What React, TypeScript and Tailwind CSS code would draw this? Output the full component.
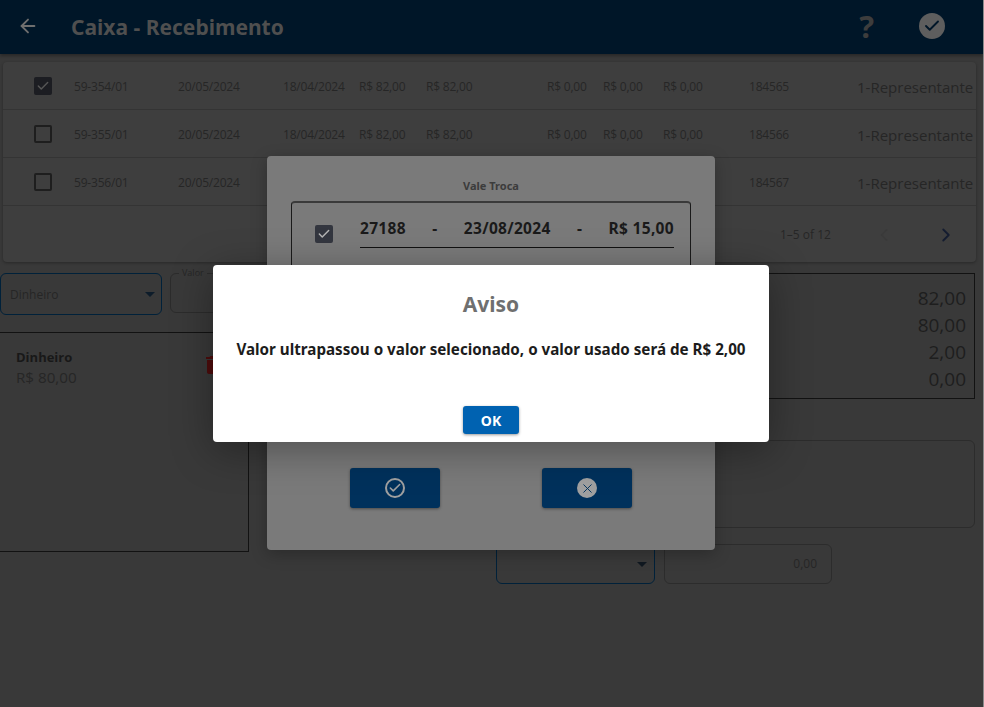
import { ArrowLeft, Check, ChevronLeft, ChevronRight, X } from "lucide-react";

const rows = [
  { id: "59-354/01", d2: "18/04/2024", num: "184565", on: true, covered: false },
  { id: "59-355/01", d2: "18/04/2024", num: "184566", on: false, covered: false },
  { id: "59-356/01", d2: "18/04/2024", num: "184567", on: false, covered: true },
];

function Box({ on, light }: { on?: boolean; light?: boolean }) {
  if (on) {
    return (
      <div className={`flex h-[18px] w-[18px] items-center justify-center rounded-[2px] ${light ? "bg-[#33363f]" : "bg-[#1c1d22]"}`}>
        <Check size={14} strokeWidth={2.5} className={light ? "text-[#b5b5b5]" : "text-[#565656]"} />
      </div>
    );
  }
  return <div className="h-[18px] w-[18px] rounded-[2px] border-2 border-[#1e1e1e]" />;
}

function Row({ r }: { r: (typeof rows)[number] }) {
  return (
    <div className="flex h-[48px] items-center border-b border-[#343434] pt-[2px] text-[12px] leading-none tracking-[-0.2px] text-[#262626]">
      <div className="ml-[31px] -mt-[1px] w-[40px]"><Box on={r.on} /></div>
      <div className="w-[104px]">{r.id}</div>
      <div className="w-[105px]">20/05/2024</div>
      <div className="w-[76px]">{r.covered ? "" : r.d2}</div>
      <div className="w-[67px]">{r.covered ? "" : "R$ 82,00"}</div>
      <div className="w-[121px]">{r.covered ? "" : "R$ 82,00"}</div>
      <div className="w-[56px]">{r.covered ? "" : "R$ 0,00"}</div>
      <div className="w-[60px]">{r.covered ? "" : "R$ 0,00"}</div>
      <div className="w-[86px]">{r.covered ? "" : "R$ 0,00"}</div>
      <div className="w-[108px]">{r.num}</div>
      <div className="whitespace-nowrap pt-[1px] text-[15px] tracking-normal">1-Representante</div>
    </div>
  );
}

export default function App() {
  return (
    <div className="relative h-[707px] w-[984px] overflow-hidden border-r border-[#8a8a8a] bg-[#393939] [font-family:'Open_Sans',sans-serif]">
      <header className="flex h-[54px] items-center bg-[#001628] shadow-[0_2px_3px_rgba(0,0,0,0.3)]">
        <ArrowLeft size={22} strokeWidth={2} className="ml-[17px] -mt-[3px] text-[#6f6f6f]" />
        <h1 className="ml-[32px] pt-[2px] text-[21px] font-bold text-[#4f4f4f] [font-family:'Noto_Sans',sans-serif]">Caixa - Recebimento</h1>
        <span className="ml-auto mr-[45px] -mt-[2px] text-[31px] font-bold leading-none text-[#3d3d3d] [font-family:'Noto_Sans',sans-serif]">?</span>
        <div className="mr-[38px] -mt-[2px] flex h-[26px] w-[26px] items-center justify-center rounded-full bg-[#5e5e5e]">
          <Check size={18} strokeWidth={2.5} className="text-[#001628]" />
        </div>
      </header>

      <section className="ml-[3px] mr-[7px] mt-[8px] h-[200px] rounded-[4px] bg-[#3e3e3e] shadow-[0_1px_3px_rgba(0,0,0,0.3)]">
        {rows.map((r) => <Row key={r.id} r={r} />)}
        <div className="flex h-[56px] items-center pt-[2px] text-[12px] text-[#262626]">
          <span className="ml-[777px]">1–5 of 12</span>
          <ChevronLeft size={20} className="ml-[43px] text-[#3a3a3a]" />
          <ChevronRight size={22} className="ml-[41px] text-[#141c30]" />
        </div>
      </section>

      <div className="mt-[11px] flex gap-[5px]">
        <div className="w-[491px]">
          <div className="flex gap-[8px]">
            <div className="flex h-[42px] w-[162px] items-center justify-between rounded-[6px] border border-[#00213a] pl-[9px] pr-[6px] pt-[2px] text-[12px] text-[#262626]">
              Dinheiro
              <span className="mb-[2px] h-0 w-0 border-x-[5px] border-t-[5px] border-x-transparent border-t-[#0d1c2a]" />
            </div>
            <div className="relative h-[40px] flex-1 rounded-[6px] border border-[#2c2c2c]">
              <span className="absolute -top-[6px] left-[8px] bg-[#393939] px-[3px] text-[9px] leading-none text-[#262626]">Valor</span>
            </div>
          </div>
          <div className="mt-[17px] flex h-[220px] w-[249px] justify-between border border-l-0 border-[#121212] pr-[23px] pl-[16px] pt-[15px]">
            <div>
              <div className="text-[13px] font-bold leading-[18px] text-[#181818]">Dinheiro</div>
              <div className="text-[15.2px] leading-[22px] text-[#262626]">R$ 80,00</div>
            </div>
            <svg viewBox="0 0 24 24" width="24" height="24" className="mt-[5px] fill-[#4e0c0c]">
              <path d="M6 19c0 1.1.9 2 2 2h8c1.1 0 2-.9 2-2V7H6v12zM19 4h-3.5l-1-1h-5l-1 1H5v2h14V4z" />
            </svg>
          </div>
        </div>
        <div className="w-[479px]">
          <div className="h-[126px] border border-[#121212] px-[8px] pt-[11px] text-right text-[19px] leading-[27px] text-[#1e1e1e]">
            <div>82,00</div>
            <div>80,00</div>
            <div>2,00</div>
            <div>0,00</div>
          </div>
          <div className="mt-[41px] h-[88px] rounded-[6px] border border-[#2c2c2c]" />
          <div className="mt-[16px] flex gap-[9px]">
            <div className="flex h-[40px] w-[159px] items-center justify-end rounded-[6px] border border-[#00213a] pr-[7px]">
              <span className="h-0 w-0 border-x-[5px] border-t-[5px] border-x-transparent border-t-[#101820]" />
            </div>
            <div className="flex h-[40px] w-[168px] items-center justify-end rounded-[6px] border border-[#2c2c2c] pr-[14px] text-[12px] text-[#262626]">0,00</div>
          </div>
        </div>
      </div>

      <div className="absolute left-[267px] top-[156px] flex h-[394px] w-[448px] flex-col items-center rounded-[4px] bg-[#7a7a7a] shadow-[0_4px_16px_rgba(0,0,0,0.25)]">
        <div className="mt-[22px] text-[11px] font-bold leading-[16px] text-[#3c3c3c] [font-family:'Noto_Sans',sans-serif]">Vale Troca</div>
        <div className="mt-[7px] h-[225px] w-[400px] rounded-[4px] border border-[#1a1a1a] border-t-2 border-t-[#3a3a3a]">
          <div className="ml-[23px] mt-[13px] flex items-start">
            <div className="mt-[9px]"><Box on light /></div>
            <div className="ml-[27px] flex h-[32px] w-[314px] items-center justify-between border-b border-[#111111] pb-[6px] text-[15.5px] font-bold leading-none tracking-[0.3px] text-[#1a1a1a] [font-family:'Noto_Sans',sans-serif]">
              <span>27188</span><span>-</span><span>23/08/2024</span><span>-</span><span>R$ 15,00</span>
            </div>
          </div>
        </div>
        <div className="mt-[42px] flex gap-[102px]">
          <div className="flex h-[40px] w-[90px] items-center justify-center rounded-[3px] bg-[#00315c] shadow-[0_1px_3px_rgba(0,0,0,0.4)]">
            <div className="flex h-[20px] w-[20px] items-center justify-center rounded-full border-2 border-[#a0a0a0]">
              <Check size={14} strokeWidth={2.75} className="text-[#a0a0a0]" />
            </div>
          </div>
          <div className="flex h-[40px] w-[90px] items-center justify-center rounded-[3px] bg-[#00315c] shadow-[0_1px_3px_rgba(0,0,0,0.4)]">
            <div className="flex h-[20px] w-[20px] items-center justify-center rounded-full bg-[#a0a0a0]">
              <X size={15} strokeWidth={1.5} className="text-[#00315c]" />
            </div>
          </div>
        </div>
      </div>

      <div className="absolute left-[213px] top-[265px] flex h-[177px] w-[556px] flex-col items-center rounded-[4px] bg-white shadow-[0_8px_40px_rgba(0,0,0,0.35)] [font-family:'Noto_Sans',sans-serif]">
        <h2 className="mt-[24px] text-[21px] font-bold leading-[30px] text-[#6f6f6f]">Aviso</h2>
        <p className="mt-[20px] whitespace-nowrap text-[15.2px] font-bold leading-[20px] text-[#1c1c1c]">Valor ultrapassou o valor selecionado, o valor usado será de R$ 2,00</p>
        <button className="mt-[47px] h-[28px] w-[56px] rounded-[3px] bg-[#0062b1] text-[14px] font-bold text-white shadow-[0_1px_3px_rgba(0,0,0,0.4)]">OK</button>
      </div>
    </div>
  );
}
